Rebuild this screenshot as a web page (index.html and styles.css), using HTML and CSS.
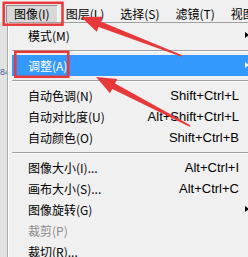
FILE: index.html
```html
<!DOCTYPE html>
<html lang="zh-CN">
<head>
    <meta charset="UTF-8">
    <title>图像菜单</title>
    <link rel="stylesheet" href="styles.css">
</head>
<body>
    <div class="screen">
        <div class="menubar">
            <span class="mb-item active">图像(I)</span>
            <span class="mb-item">图层(L)</span>
            <span class="mb-item">选择(S)</span>
            <span class="mb-item">滤镜(T)</span>
            <span class="mb-item">视图</span>
        </div>

        <div class="workspace">
            <div class="side">
                <span class="side-num">84</span>
            </div>

            <div class="menu">
                <div class="item has-sub"><span class="label">模式(M)</span></div>
                <div class="sep"></div>
                <div class="item has-sub selected"><span class="label">调整(A)</span></div>
                <div class="sep"></div>
                <div class="item"><span class="label">自动色调(N)</span><span class="key">Shift+Ctrl+L</span></div>
                <div class="item"><span class="label">自动对比度(U)</span><span class="key">Alt+Shift+Ctrl+L</span></div>
                <div class="item"><span class="label">自动颜色(O)</span><span class="key">Shift+Ctrl+B</span></div>
                <div class="sep"></div>
                <div class="item"><span class="label">图像大小(I)...</span><span class="key">Alt+Ctrl+I</span></div>
                <div class="item"><span class="label">画布大小(S)...</span><span class="key">Alt+Ctrl+C</span></div>
                <div class="item has-sub"><span class="label">图像旋转(G)</span></div>
                <div class="item disabled"><span class="label">裁剪(P)</span></div>
                <div class="item"><span class="label">裁切(R)...</span></div>
            </div>
        </div>

        <!-- annotations drawn over the screenshot -->
        <svg class="marks" width="248" height="257" viewBox="0 0 248 257">
            <rect x="3.7" y="2.8" width="58.8" height="21.9" fill="none" stroke="#e8393a" stroke-width="2.5"/>
            <rect x="15.3" y="51.8" width="53" height="25" fill="none" stroke="#e8393a" stroke-width="2.5"/>
            <polygon fill="#e8393a" points="81,17 102.6,16.7 100.8,21.4 182.3,55.3 181.7,56.7 98.6,27 96.8,31.7"/>
            <polygon fill="#e8393a" points="96,77 117.4,79.1 115.1,83.5 190.4,125.3 189.6,126.7 112.3,88.9 110,93.3"/>
        </svg>
    </div>
</body>
</html>
```

FILE: styles.css
```css
body {
    margin: 0;
    padding: 0;
    background-color: #f0f0f0;
    overflow: hidden;
}
.screen {
    position: relative;
    width: 248px;
    height: 257px;
    overflow: hidden;
    background-color: #f0f0f0;
    font-family: "Noto Sans CJK SC", "Liberation Sans", sans-serif;
    font-size: 12px;
    color: #000;
}
.menubar {
    display: flex;
    align-items: flex-start;
    height: 22px;
    padding: 5px 0 0 6px;
    box-sizing: border-box;
    white-space: nowrap;
}
.mb-item {
    height: 16px;
    line-height: 15px;
    padding: 0 7px;
    border: 1px solid transparent;
}
.mb-item.active {
    background-color: #d8d8d8;
    border-color: #8e8e8e #f8f8f8 #f8f8f8 #8e8e8e;
}
.workspace {
    display: flex;
    height: 235px;
}
.side {
    width: 7px;
    flex-shrink: 0;
    background-color: #e2e2e2;
    border-right: 1px solid #a9a9a9;
    overflow: hidden;
}
.side-num {
    display: block;
    margin-top: 45px;
    font-family: "Liberation Sans", sans-serif;
    font-size: 9px;
    line-height: 10px;
    color: #3a5ea8;
    white-space: nowrap;
}
.menu {
    width: 244px;
    flex-shrink: 0;
    border-top: 1px solid #a0a0a0;
    border-left: 1px solid #ffffff;
    padding: 2px 3px;
}
.item {
    position: relative;
    display: flex;
    justify-content: space-between;
    height: 21px;
    line-height: 21px;
    padding: 0 17px 0 16px;
    white-space: nowrap;
}
.key {
    font-family: "Liberation Sans", sans-serif;
    font-size: 13px;
}
.item.selected {
    background-color: #3399ff;
    color: #fff;
}
.item.disabled {
    color: #8d8d8d;
}
.has-sub::after {
    content: "";
    position: absolute;
    right: 7px;
    top: 7px;
    border-left: 4px solid #000;
    border-top: 3.5px solid transparent;
    border-bottom: 3.5px solid transparent;
}
.selected.has-sub::after {
    border-left-color: #fff;
}
.sep {
    height: 1px;
    margin: 4px 0 3px 0;
    background-color: #a0a0a0;
    border-bottom: 1px solid #ffffff;
}
.marks {
    position: absolute;
    left: 0;
    top: 0;
    pointer-events: none;
}
```
